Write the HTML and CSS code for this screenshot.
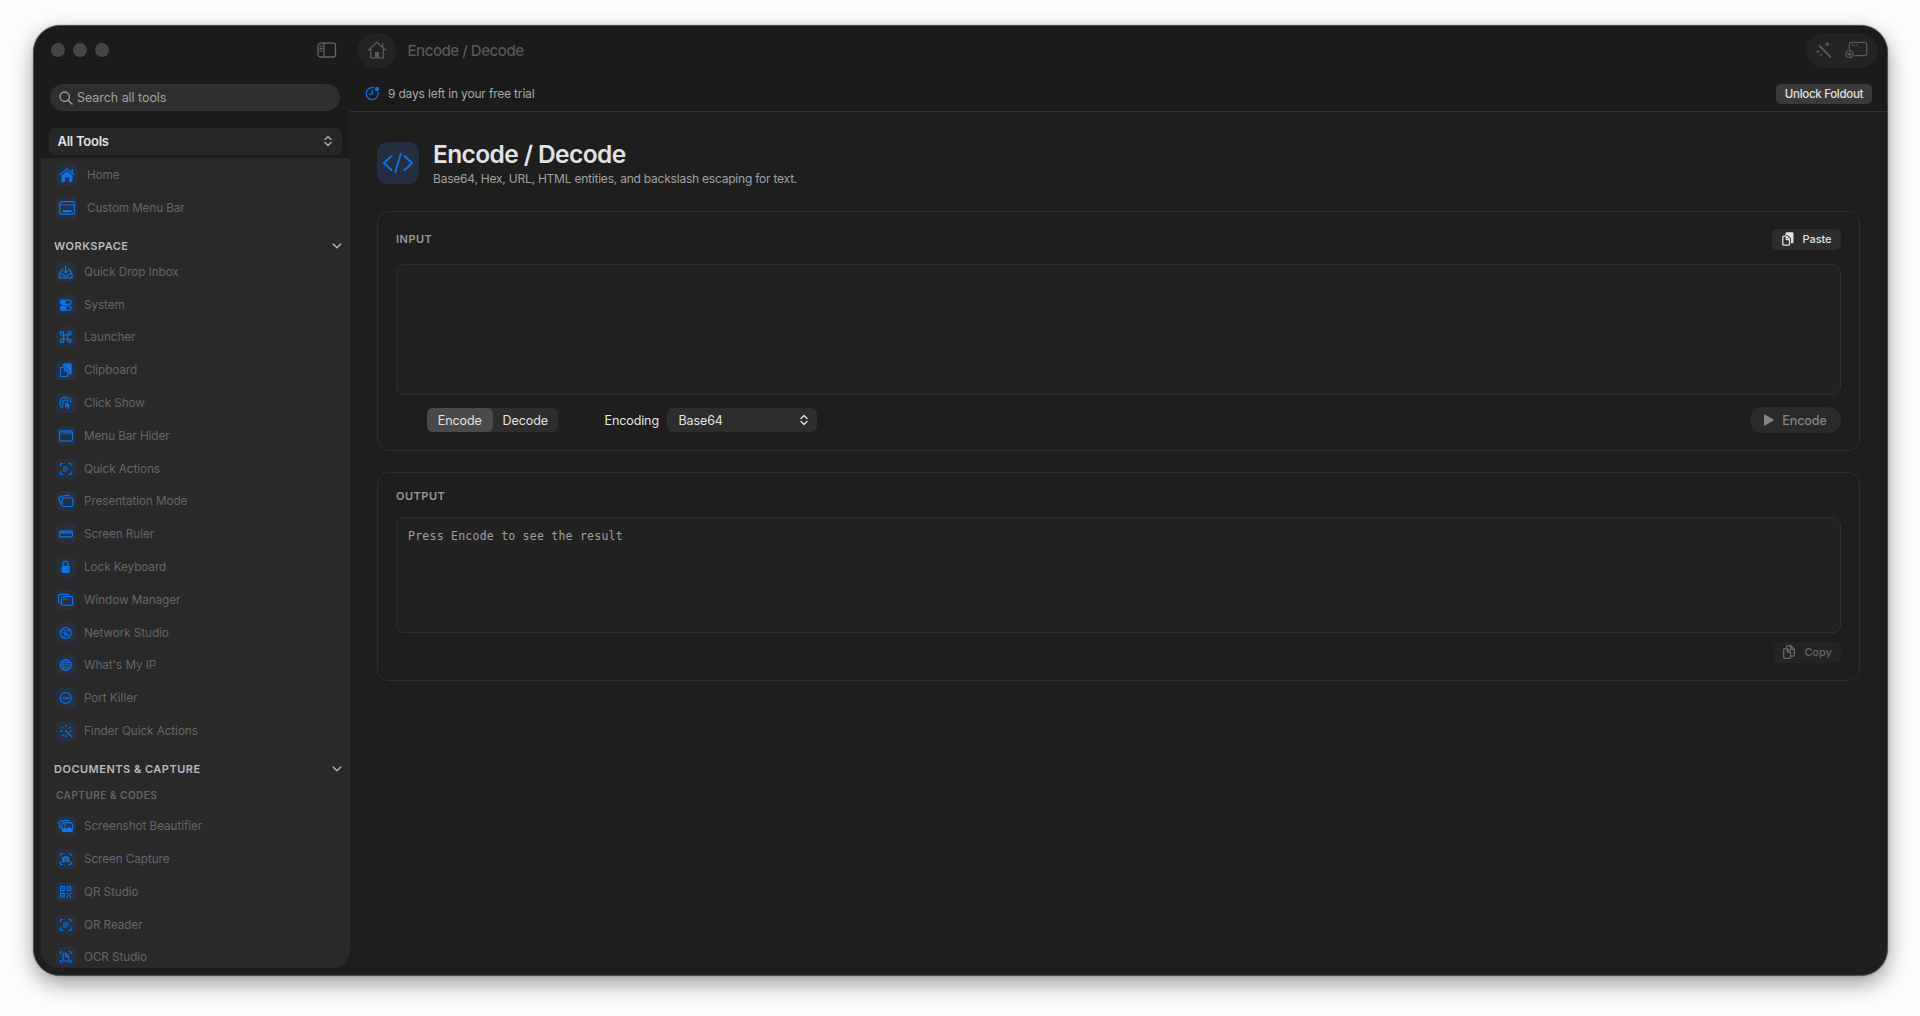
FILE: index.html
```
<!DOCTYPE html>
<html lang="en">
<head>
    <meta charset="utf-8">
    <title>Foldout</title>
    <link rel="stylesheet" href="styles.css">
</head>

<body>
<svg class="sprite">
    <symbol id="i-home" viewBox="0 0 22 22"><path d="M3.5 11 11 4.8l7.5 6.2" class="line"/><path d="M15.3 5.5h1.8v4h-1.8z" class="solid"/><path d="M5.5 11.5 11 7l5.5 4.5V17a1 1 0 0 1-1 1h-2.5v-4.500H9.200V18H6.500a1 1 0 0 1-1-1z" class="solid"/></symbol>
    <symbol id="i-menubar" viewBox="0 0 22 22"><rect x="3.6" y="4.7" width="14.8" height="12.5" rx="2.4" class="line"/><path d="M4 8h14" class="line"/><path d="M6.5 14.2h9" class="line thick"/></symbol>
    <symbol id="i-inbox" viewBox="0 0 20 20"><path d="M9.700 3.500v7.500M7.500 9l2.200 2.200L11.900 9M7.500 6.800 6.200 7.500 3.500 11.800v4h12.500v-4L13.300 7.500 12 6.800M3.500 11.800h2.800l1.700 2h3.500l1.700-2H16" class="line"/></symbol>
    <symbol id="i-system" viewBox="0 0 20 20"><rect x="4.5" y="5.2" width="10.5" height="4.2" rx="1.8" class="line"/><rect x="4.5" y="11" width="10.5" height="4.2" rx="1.8" class="line"/><rect x="4.2" y="5" width="5.6" height="4.6" rx="1.8" class="solid"/><rect x="4.2" y="10.8" width="6.5" height="4.6" rx="1.8" class="solid"/></symbol>
    <symbol id="i-command" viewBox="0 0 20 20"><path d="M7.700 8V6.300A1.700 1.700 0 1 0 6 8h7.400a1.700 1.700 0 1 0-1.700-1.700v7.400a1.700 1.700 0 1 0 1.700-1.700H6a1.700 1.700 0 1 0 1.700 1.700z" class="line"/></symbol>
    <symbol id="i-clipboard" viewBox="0 0 20 20"><path d="M7 4.700A1.500 1.500 0 0 1 8.500 3.200h5.700A1.500 1.500 0 0 1 15.700 4.700v8.300a1.500 1.500 0 0 1-1.500 1.500H12.500V10L9 6.200H7z" class="solid"/><path d="M4.600 7.400h4l3 3.200v5.900h-7zM8.300 7.600v3.200h3" class="line"/></symbol>
    <symbol id="i-click" viewBox="0 0 20 20"><path d="M7 14.800A5.500 5.500 0 1 1 15 10M7.500 12A3 3 0 1 1 12.500 9" class="line"/><path d="M9 8.500l5.500 4-2 .5 1.200 2.600-1.300.6-1.200-2.700-1.700 1.200z" class="solid"/></symbol>
    <symbol id="i-window" viewBox="0 0 20 20"><rect x="3.5" y="4.900" width="13" height="10.300" rx="1.800" class="line"/><path d="M4 5.500h12v2.800H4z" class="tint"/></symbol>
    <symbol id="i-scan-text" viewBox="0 0 20 20"><path d="M4.500 7V5.500a1 1 0 0 1 1-1H7M12.500 4.500H14a1 1 0 0 1 1 1V7M15 12.500v2a1 1 0 0 1-1 1h-1.500M7 15.500H5.500a1 1 0 0 1-1-1v-2M6.800 8h4.500M6.800 10h6M6.800 12h3.500" class="line"/></symbol>
    <symbol id="i-stack" viewBox="0 0 20 20"><path d="M5.500 13.200 4.300 12.700 2.800 7 4 5.500 12.500 4.200l1.300 1.200" class="line"/><rect x="6" y="7" width="10.800" height="8.500" rx="1.500" class="line"/></symbol>
    <symbol id="i-ruler" viewBox="0 0 20 20"><rect x="3.500" y="7.200" width="13" height="5.600" rx="1" class="line"/><path d="M4 7.500h12v2.500H4z" class="tint"/><path d="M6 7.500v2M8 7.500v2M10 7.500v3M12 7.500v2M14 7.500v2" class="line thin"/></symbol>
    <symbol id="i-lock" viewBox="0 0 20 20"><path d="M7.200 9V6.800a2.500 2.500 0 0 1 5 0V9" class="line"/><rect x="5.600" y="8.700" width="8.200" height="7.200" rx="1.300" class="solid"/></symbol>
    <symbol id="i-windows" viewBox="0 0 20 20"><path d="M5 13H4.200a1.500 1.500 0 0 1-1.500-1.500v-6A1.500 1.500 0 0 1 4.200 4.300h7.600a1.500 1.500 0 0 1 1.500 1.200" class="line"/><rect x="5.600" y="6.700" width="11" height="8.500" rx="1.500" class="line"/><path d="M7 9.300h5" class="line thin"/></symbol>
    <symbol id="i-network" viewBox="0 0 20 20"><circle cx="9.700" cy="10" r="5.500" class="line"/><path d="M4.500 8.500l5 2.500 4-5M9.500 11l-1 4.500M9.500 11l5.500 1M7 5.500 9.500 11l4 3M6 14l3.500-3M5 7h9" class="line thin"/><circle cx="9.500" cy="10.800" r="1.300" class="solid"/></symbol>
    <symbol id="i-globe" viewBox="0 0 20 20"><circle cx="9.700" cy="10" r="5.500" class="line"/><ellipse cx="9.700" cy="10" rx="2.600" ry="5.500" class="line thin"/><path d="M4.500 10h10.500M9.700 4.500v11M5.200 7.300h9M5.200 12.700h9" class="line thin"/></symbol>
    <symbol id="i-port" viewBox="0 0 20 20"><circle cx="9.700" cy="10" r="5.400" class="line"/><path d="M6.500 11.200c1.400-2.400 2.300-1.600 3.200-1s1.800 1 3.200-1.300" class="line"/></symbol>
    <symbol id="i-rays" viewBox="0 0 20 20"><path d="M10 4v2.200M7.500 13.500 6 15M10 14v2M4 10.200h2.500M13.800 10.200H16M5.600 5.800l1.600 1.600M14.500 5.800l-1.600 1.600M9.200 9.500l6.500 6.300" class="line"/></symbol>
    <symbol id="i-photos" viewBox="0 0 20 20"><path d="M5 12.500 4 12 2.800 6.500 4 5.200 12 4.300l1.200 1.200" class="line"/><rect x="6" y="6.900" width="10.500" height="8.400" rx="1.400" class="line"/><path d="M6.500 15v-2l2.300-2 2 1.800 2.500-2.400 3 2.600v2z" class="solid"/><circle cx="9" cy="9.200" r="1" class="solid"/></symbol>
    <symbol id="i-capture" viewBox="0 0 20 20"><path d="M4.500 7V5.500a1 1 0 0 1 1-1H7M12.500 4.500H14a1 1 0 0 1 1 1V7M15 12.500v2a1 1 0 0 1-1 1h-1.500M7 15.500H5.500a1 1 0 0 1-1-1v-2" class="line"/><path d="M6.200 8h1.500l.8-1h2.500l.8 1h1.500v5h-7.100z" class="solid"/><circle cx="9.750" cy="10.400" r="1.400" class="lens"/></symbol>
    <symbol id="i-qr" viewBox="0 0 20 20"><path d="M4.500 4.700h3.800v3.800H4.500zM11 4.700h3.800v3.800H11zM4.500 11.200h3.800V15H4.500z" class="line"/><path d="M6 6.200h1v1H6zM12.500 6.200h1v1h-1zM6 12.700h1v1H6zM10.500 10.700h1.500v1.500h-1.500zM13.800 10.700h1.500v1.500h-1.500zM12.200 12.400h1.500v1.500h-1.500zM10.500 14.200H12v1.500h-1.500zM13.800 14.200h1.500v1.500h-1.500z" class="solid"/></symbol>
    <symbol id="i-qr-read" viewBox="0 0 20 20"><path d="M4.500 7V5.500a1 1 0 0 1 1-1H7M12.500 4.500H14a1 1 0 0 1 1 1V7M15 12.500v2a1 1 0 0 1-1 1h-1.500M7 15.500H5.500a1 1 0 0 1-1-1v-2" class="line"/><path d="M6.800 7h6.200v4h-2v2H6.800z" class="tint"/></symbol>
    <symbol id="i-ocr" viewBox="0 0 20 20"><path d="M4.500 7V5.500a1 1 0 0 1 1-1H6M13 4.500h1a1 1 0 0 1 1 1V7M15 13v1.500a1 1 0 0 1-1 1h-1M6 15.500h-.5a1 1 0 0 1-1-1V13" class="line"/><path d="M7 6.300h2.700L12.800 9.500V14H7zM9.500 6.500v3.200h3" class="line"/></symbol>
    <symbol id="i-updown" viewBox="0 0 8 12"><path d="M1 4.500 4 1.500l3 3M1 7.500l3 3 3-3" class="stroke"/></symbol>
    <symbol id="i-chevron" viewBox="0 0 10 6"><path d="M1.200 1 5 4.800 8.800 1" class="stroke"/></symbol>
</svg>

<div class="window">
    <aside class="sidebar">
        <div class="titlebar">
            <span class="dot"></span><span class="dot"></span><span class="dot"></span>
            <svg class="toggle" width="20" height="16" viewBox="0 0 20 16"><rect x="1" y="1.2" width="17.5" height="13.8" rx="2.5" class="stroke"/><path d="M7 1.200V15M3 4.200h2M3 6.500h2M3 8.800h2" class="stroke"/></svg>
        </div>
        <div class="search">
            <svg width="14" height="14" viewBox="0 0 14 14"><circle cx="5.7" cy="5.7" r="4.7" class="stroke"/><path d="M9.2 9.2 13 13" class="stroke"/></svg>
            <span>Search all tools</span>
        </div>
        <div class="filter">
            <span>All Tools</span>
            <svg width="8" height="12"><use href="#i-updown"/></svg>
        </div>
        <nav class="list">
            <a class="item top"><svg><use href="#i-home"/></svg><span>Home</span></a>
            <a class="item top"><svg><use href="#i-menubar"/></svg><span>Custom Menu Bar</span></a>
            <div class="section"><span>WORKSPACE</span><svg width="10" height="6"><use href="#i-chevron"/></svg></div>
            <a class="item"><svg><use href="#i-inbox"/></svg><span>Quick Drop Inbox</span></a>
            <a class="item"><svg><use href="#i-system"/></svg><span>System</span></a>
            <a class="item"><svg><use href="#i-command"/></svg><span>Launcher</span></a>
            <a class="item"><svg><use href="#i-clipboard"/></svg><span>Clipboard</span></a>
            <a class="item"><svg><use href="#i-click"/></svg><span>Click Show</span></a>
            <a class="item"><svg><use href="#i-window"/></svg><span>Menu Bar Hider</span></a>
            <a class="item"><svg><use href="#i-scan-text"/></svg><span>Quick Actions</span></a>
            <a class="item"><svg><use href="#i-stack"/></svg><span>Presentation Mode</span></a>
            <a class="item"><svg><use href="#i-ruler"/></svg><span>Screen Ruler</span></a>
            <a class="item"><svg><use href="#i-lock"/></svg><span>Lock Keyboard</span></a>
            <a class="item"><svg><use href="#i-windows"/></svg><span>Window Manager</span></a>
            <a class="item"><svg><use href="#i-network"/></svg><span>Network Studio</span></a>
            <a class="item"><svg><use href="#i-globe"/></svg><span>What's My IP</span></a>
            <a class="item"><svg><use href="#i-port"/></svg><span>Port Killer</span></a>
            <a class="item"><svg><use href="#i-rays"/></svg><span>Finder Quick Actions</span></a>
            <div class="section"><span>DOCUMENTS &amp; CAPTURE</span><svg width="10" height="6"><use href="#i-chevron"/></svg></div>
            <div class="subsection"><span>CAPTURE &amp; CODES</span></div>
            <a class="item"><svg><use href="#i-photos"/></svg><span>Screenshot Beautifier</span></a>
            <a class="item"><svg><use href="#i-capture"/></svg><span>Screen Capture</span></a>
            <a class="item"><svg><use href="#i-qr"/></svg><span>QR Studio</span></a>
            <a class="item"><svg><use href="#i-qr-read"/></svg><span>QR Reader</span></a>
            <a class="item"><svg><use href="#i-ocr"/></svg><span>OCR Studio</span></a>
        </nav>
    </aside>

    <main class="main">
        <header class="toolbar">
            <div class="home">
                <svg width="20" height="19" viewBox="0 0 20 19"><path d="M1.200 9.200 10 1.300l8.800 7.900M3.700 7.500v9.300h12.600V7.500M15.700 2.500v3.500" class="stroke"/><path d="M8 16.500v-5.500h4v5.500z" class="door"/></svg>
            </div>
            <span class="crumb">Encode / Decode</span>
            <div class="tools">
                <svg width="18" height="18" viewBox="0 0 18 18"><path d="M4.800 5 15.500 16" class="wand"/><path d="M12.300.5l.8 2 2 .8-2 .8-.8 2-.8-2-2-.8 2-.8zM3 8.500l.6 1.500 1.500.6-1.500.6L3 12.700l-.6-1.500-1.500-.6 1.500-.6zM6 12.700a1 1 0 1 1 0 2 1 1 0 0 1 0-2z" class="fill"/></svg>
                <svg width="23" height="18" viewBox="0 0 23 18"><path d="M4.300 8V3.500A2.200 2.200 0 0 1 6.500 1.300h13A2.200 2.200 0 0 1 21.700 3.500v9a2.200 2.200 0 0 1-2.200 2.200H10" class="stroke"/><path d="M6.800 4.200h.6M9 4.200h.6M11.200 4.200h.6" class="stroke"/><circle cx="4.5" cy="13" r="3.7" class="stroke"/><path d="M4.500 11v4M2.500 13h4" class="stroke"/></svg>
            </div>
        </header>
        <div class="trial">
            <svg width="15" height="15" viewBox="0 0 15 15"><path d="M8.500 1.700a6 6 0 1 0 4.600 4.800M7.300 4.300v3.800H4.500" class="stroke"/><circle cx="12" cy="3" r="2.2" class="fill"/></svg>
            <span>9 days left in your free trial</span>
            <button class="unlock">Unlock Foldout</button>
        </div>

        <div class="page">
            <div class="heading">
                <div class="badge">
                    <svg width="30" height="20" viewBox="0 0 30 20"><path d="M8.500 3 1 10l7.500 7M21.500 3 29 10l-7.500 7M17.700 1l-5.400 18" class="stroke"/></svg>
                </div>
                <div>
                    <h1>Encode / Decode</h1>
                    <p>Base64, Hex, URL, HTML entities, and backslash escaping for text.</p>
                </div>
            </div>

            <section class="card input">
                <div class="card-head">
                    <h2>INPUT</h2>
                    <button class="small"><svg width="12" height="14" viewBox="0 0 12 14"><path d="M3.500 1.500A1.200 1.200 0 0 1 4.700.3h5.500A1.300 1.300 0 0 1 11.500 1.500v8.500a1.200 1.200 0 0 1-1.200 1.200H9V6.500L5.800 3.300H3.500z" class="fill"/><path d="M.8 5.200A1 1 0 0 1 1.800 4.200H4.500l3 3v5a1 1 0 0 1-1 1H1.800a1 1 0 0 1-1-1zM4.300 4.500v3h3" class="stroke"/></svg>Paste</button>
                </div>
                <div class="field"></div>
                <div class="controls">
                    <div class="segments"><span class="on">Encode</span><span>Decode</span></div>
                    <label>Encoding</label>
                    <div class="select"><span>Base64</span><svg width="8" height="12"><use href="#i-updown"/></svg></div>
                    <button class="run"><svg width="10" height="12" viewBox="0 0 10 12"><path d="M0 1v10a.6.6 0 0 0 1 .5l8.500-5a.6.6 0 0 0 0-1L1 .5A.6.6 0 0 0 0 1z" class="fill"/></svg>Encode</button>
                </div>
            </section>

            <section class="card output">
                <div class="card-head"><h2>OUTPUT</h2></div>
                <pre class="field">Press Encode to see the result</pre>
                <div class="actions">
                    <button class="small off"><svg width="12" height="14" viewBox="0 0 12 14"><path d="M3.500 3V1.700A1 1 0 0 1 4.500.7h3.300l3.500 3.500v6a1 1 0 0 1-1 1H8M7.500.9v3.500h3.600M.7 4.700a1 1 0 0 1 1-1h2.600l3.300 3.300v5.300a1 1 0 0 1-1 1H1.700a1 1 0 0 1-1-1zM4.200 4v3.200h3.200" class="stroke"/></svg>Copy</button>
                </div>
            </section>
        </div>
    </main>
</div>
</body>
</html>
```

FILE: styles.css
```
* {
    box-sizing: border-box;
}

body {
    margin: 0;
    padding: 25px 0 0 33px;
    height: 1016px;
    overflow: hidden;
    background: #fdfdfd;
    color: #e2e2e2;
    font-family: Inter, "Liberation Sans", sans-serif;
    font-size: 12px;
}

h1, h2, p, pre {
    margin: 0;
}

button {
    border: 0;
    padding: 0;
    font: inherit;
    color: inherit;
    display: flex;
    align-items: center;
    justify-content: center;
}

svg {
    flex: none;
    display: block;
}

.sprite {
    width: 0;
    height: 0;
    position: absolute;
}

.stroke {
    fill: none;
    stroke: currentColor;
    stroke-width: 1.3;
    stroke-linecap: round;
    stroke-linejoin: round;
}

.fill {
    fill: currentColor;
}

.line {
    fill: none;
    stroke: #0a74ea;
    stroke-width: 1.2;
    stroke-linejoin: round;
}

.thick {
    stroke-width: 2.2;
}

.thin {
    stroke-width: 0.8;
}

.solid {
    fill: #0a74ea;
}

.tint {
    fill: #0a74ea;
    opacity: 0.5;
}

.lens {
    fill: none;
    stroke: #26303f;
    stroke-width: 0.6;
}

.window {
    display: flex;
    width: 1855px;
    height: 951px;
    border: 1px solid #505050;
    border-radius: 27px;
    overflow: hidden;
    background: #1e1e1e;
    box-shadow: 0 0 2px rgba(0, 0, 0, 0.3), 0 8px 22px rgba(0, 0, 0, 0.38);
}

/* sidebar */
.sidebar {
    width: 316px;
    padding-left: 7px;
    background: linear-gradient(#1b1b1b 132px, #1e1e1e 132px);
}

.titlebar {
    display: flex;
    align-items: center;
    gap: 8px;
    height: 48px;
    padding: 0 13px 0 10px;
}

.dot {
    width: 14px;
    height: 14px;
    border-radius: 50%;
    background: #454545;
}

.toggle {
    margin-left: auto;
    color: #646464;
}

.search {
    display: flex;
    align-items: center;
    gap: 4px;
    width: 290px;
    height: 27px;
    margin: 10px 0 0 9px;
    padding-left: 9px;
    border-radius: 14px;
    background: #2f2f2f;
    color: #a0a0a0;
    font-size: 12.5px;
    letter-spacing: -0.05px;
}

.filter {
    display: flex;
    align-items: center;
    justify-content: space-between;
    width: 293px;
    height: 27px;
    margin: 16.5px 0 3.5px 7.5px;
    padding: 0 10px 0 9px;
    border-radius: 6px;
    background: #272727;
    font-size: 13px;
    font-weight: 600;
    letter-spacing: -0.25px;
}

.filter svg {
    color: #b0b0b0;
}

.list {
    height: 810px;
    padding: 0.3px 0 0 15px;
    overflow: hidden;
    background: #292929;
    border-radius: 0 0 18px 18px;
}

.item {
    display: flex;
    align-items: center;
    gap: 8px;
    height: 32.82px;
    color: #666;
    font-size: 11.7px;
    letter-spacing: -0.05px;
}

.item svg {
    width: 20px;
    height: 20px;
    border-radius: 5px;
    background: #26303f;
}

.item.top {
    height: 33px;
    gap: 9px;
    letter-spacing: -0.1px;
}

.item.top svg {
    width: 22px;
    height: 22px;
}

.section {
    display: flex;
    align-items: center;
    justify-content: space-between;
    height: 31px;
    padding: 12px 8px 0 0;
    margin-left: -2px;
    color: #b9b9b9;
    font-size: 11px;
    font-weight: 600;
    letter-spacing: 0.5px;
}

.subsection {
    height: 31.2px;
    padding-top: 11px;
    color: #666;
    font-size: 10px;
    font-weight: 600;
    letter-spacing: 0.5px;
}

/* top bars */
.main {
    flex: 1;
}

.toolbar {
    display: flex;
    align-items: center;
    height: 48px;
    padding: 0 9px 0 7px;
    background: #1b1b1b;
}

.home {
    display: flex;
    align-items: center;
    justify-content: center;
    width: 39px;
    height: 35px;
    border-radius: 18px;
    background: #232323;
    color: #5a5a5a;
}

.door {
    fill: #5a5a5a;
}

.crumb {
    margin-left: 11.5px;
    color: #585858;
    font-size: 15px;
    font-weight: 500;
    letter-spacing: -0.45px;
}

.tools {
    display: flex;
    align-items: center;
    justify-content: space-between;
    width: 72px;
    height: 35px;
    margin-left: auto;
    padding: 0 10px 0 9px;
    border-radius: 18px;
    background: #232323;
    color: #5a5a5a;
}

.wand {
    stroke: currentColor;
    stroke-width: 1.8;
    stroke-linecap: round;
}

.trial {
    display: flex;
    align-items: center;
    gap: 8px;
    height: 38px;
    padding: 2.5px 15px 0 15px;
    border-bottom: 1px solid #323232;
    background: #1b1b1b;
    color: #a8a8a8;
    letter-spacing: -0.18px;
}

.trial svg {
    color: #0a74ea;
}

.unlock {
    width: 96px;
    height: 20px;
    margin-left: auto;
    border-radius: 5px;
    background: #3a3a3a;
    color: #e2e2e2;
    font-size: 11.5px;
    font-weight: 500;
    letter-spacing: -0.3px;
}

/* page */
.page {
    padding: 29.5px 27px 0;
}

.heading {
    display: flex;
    gap: 14px;
    height: 42px;
    margin-bottom: 27.5px;
}

.badge {
    display: flex;
    align-items: center;
    justify-content: center;
    width: 42px;
    height: 42px;
    border-radius: 10px;
    background: #232f40;
    color: #0a74ea;
}

.badge .stroke {
    stroke-width: 1.9;
}

h1 {
    font-size: 24.5px;
    font-weight: 600;
    line-height: 25px;
    letter-spacing: -0.6px;
}

.heading p {
    margin-top: 4.5px;
    color: #a0a0a0;
    line-height: 16px;
    letter-spacing: -0.22px;
}

.card {
    border: 1px solid #2f2f2f;
    border-radius: 12px;
    padding: 0 18px;
}

.card.input {
    height: 239.5px;
    padding-top: 16.5px;
    margin-bottom: 21px;
}

.card.output {
    height: 209px;
    padding-top: 13px;
}

.card-head {
    display: flex;
    align-items: center;
    justify-content: space-between;
    height: 21px;
}

h2 {
    color: #989898;
    font-size: 11px;
    font-weight: 600;
    letter-spacing: 0.5px;
}

.small {
    gap: 9px;
    width: 69px;
    height: 21px;
    border-radius: 5px;
    background: #2d2d2d;
    font-size: 11px;
    font-weight: 500;
    letter-spacing: -0.1px;
}

.small.off {
    width: 67px;
    background: #242424;
    color: #666;
}

.field {
    border: 1px solid #2f2f2f;
    border-radius: 8px;
    background: #222222;
}

.input .field {
    height: 131px;
    margin-top: 14.5px;
}

.output .field {
    height: 116px;
    margin-top: 10px;
    padding: 10px 11px;
    color: #a0a0a0;
    font-family: "DejaVu Sans Mono", monospace;
    font-size: 11.5px;
    line-height: 16px;
    letter-spacing: 0.24px;
}

.controls {
    display: flex;
    align-items: center;
    height: 26px;
    margin-top: 12px;
    padding-left: 31px;
    font-size: 12.5px;
    letter-spacing: -0.1px;
}

.segments {
    display: flex;
    height: 24px;
    border-radius: 6px;
    background: #2d2d2d;
}

.segments span {
    width: 65.5px;
    line-height: 25px;
    text-align: center;
}

.segments .on {
    border-radius: 6px;
    background: #4a4a4a;
}

.controls label {
    margin-left: 46.5px;
    width: 62px;
}

.select {
    display: flex;
    align-items: center;
    justify-content: space-between;
    width: 150px;
    height: 24px;
    padding: 0 9px 0 12px;
    border-radius: 6px;
    background: #2d2d2d;
}

.run {
    gap: 8px;
    width: 91px;
    height: 26px;
    margin-left: auto;
    border-radius: 13px;
    background: #2a2a2a;
    color: #858585;
    font-weight: 500;
    letter-spacing: -0.1px;
}

.actions {
    display: flex;
    justify-content: flex-end;
    margin-top: 9px;
}
```
